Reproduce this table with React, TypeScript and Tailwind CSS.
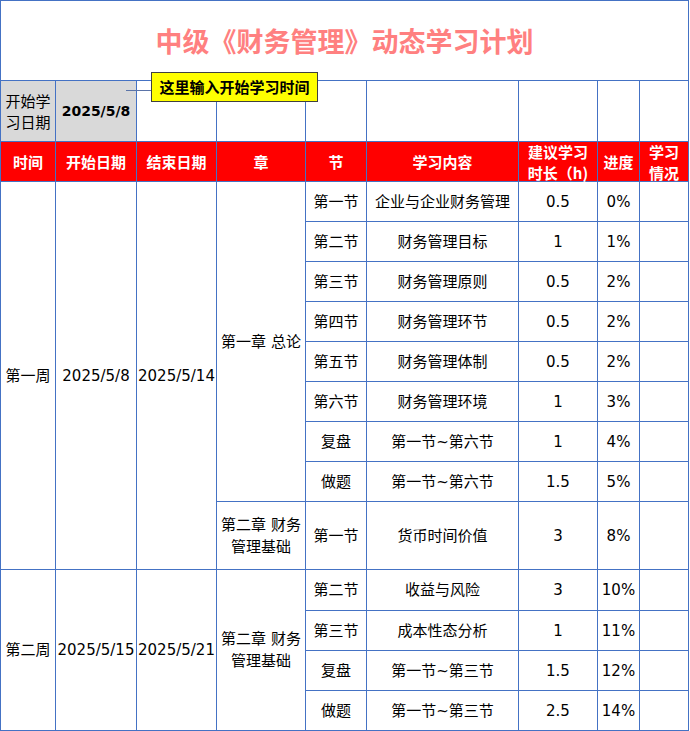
const ROWS = [
  { jie: "第一节", content: "企业与企业财务管理", hours: "0.5", progress: "0%" },
  { jie: "第二节", content: "财务管理目标", hours: "1", progress: "1%" },
  { jie: "第三节", content: "财务管理原则", hours: "0.5", progress: "2%" },
  { jie: "第四节", content: "财务管理环节", hours: "0.5", progress: "2%" },
  { jie: "第五节", content: "财务管理体制", hours: "0.5", progress: "2%" },
  { jie: "第六节", content: "财务管理环境", hours: "1", progress: "3%" },
  { jie: "复盘", content: "第一节~第六节", hours: "1", progress: "4%" },
  { jie: "做题", content: "第一节~第六节", hours: "1.5", progress: "5%" },
];

const WEEK2 = [
  { jie: "第二节", content: "收益与风险", hours: "3", progress: "10%" },
  { jie: "第三节", content: "成本性态分析", hours: "1", progress: "11%" },
  { jie: "复盘", content: "第一节~第三节", hours: "1.5", progress: "12%" },
  { jie: "做题", content: "第一节~第三节", hours: "2.5", progress: "14%" },
];

const cell = "flex items-center justify-center text-center bg-white";
const head = "flex items-center justify-center text-center bg-[#ff0000] text-white font-bold font-['Noto_Sans_CJK_SC',sans-serif] leading-[21px]";

function SectionRow({ jie, content, hours, progress }: { jie: string; content: string; hours: string; progress: string }) {
  return (
    <>
      <div className={cell}>{jie}</div>
      <div className={cell}>{content}</div>
      <div className={cell}>{hours}</div>
      <div className={cell}>{progress}</div>
      <div className={cell}></div>
    </>
  );
}

export default function App() {
  return (
    <div className="relative w-[690px] h-[731px] bg-white overflow-hidden font-['DejaVu_Sans','Noto_Sans_CJK_SC',sans-serif] text-[15px] text-black leading-[22px]">
      <div className="grid w-[689px] gap-px p-px bg-[#4472c4] grid-cols-[54px_80px_79px_88px_60px_151px_78px_41px_48px] grid-rows-[79px_60px_39px_39px_39px_39px_39px_39px_39px_39px_39px_67px_40px_39px_39px_39px]">
        {/* Title */}
        <div className="col-span-9 flex items-center justify-center bg-white text-[27px] font-bold text-[#ff8080] font-['Noto_Sans_CJK_SC',sans-serif]">
          中级《财务管理》动态学习计划
        </div>

        {/* Start date row */}
        <div className="flex items-center justify-center text-center bg-[#d9d9d9] font-['Noto_Sans_CJK_SC',sans-serif] leading-[21px]">
          开始学<br />习日期
        </div>
        <div className="flex items-center justify-center bg-[#d9d9d9] font-bold text-[14px]">2025/5/8</div>
        <div className={cell}></div>
        <div className={cell}></div>
        <div className={cell}></div>
        <div className={cell}></div>
        <div className={cell}></div>
        <div className={cell}></div>
        <div className={cell}></div>

        {/* Header */}
        <div className={head}>时间</div>
        <div className={head}>开始日期</div>
        <div className={head}>结束日期</div>
        <div className={head}>章</div>
        <div className={head}>节</div>
        <div className={head}>学习内容</div>
        <div className={head}>
          建议学习<br />时长（h)
        </div>
        <div className={head}>进度</div>
        <div className={head}>
          学习<br />情况
        </div>

        {/* Week 1 */}
        <div className={`${cell} row-span-9`}>第一周</div>
        <div className={`${cell} row-span-9`}>2025/5/8</div>
        <div className={`${cell} row-span-9`}>2025/5/14</div>
        <div className={`${cell} row-span-8`}>第一章 总论</div>
        {ROWS.map((r, i) => (
          <SectionRow key={i} {...r} />
        ))}
        <div className={cell}>
          第二章 财务<br />管理基础
        </div>
        <SectionRow jie="第一节" content="货币时间价值" hours="3" progress="8%" />

        {/* Week 2 */}
        <div className={`${cell} row-span-4`}>第二周</div>
        <div className={`${cell} row-span-4`}>2025/5/15</div>
        <div className={`${cell} row-span-4`}>2025/5/21</div>
        <div className={`${cell} row-span-4`}>
          第二章 财务<br />管理基础
        </div>
        {WEEK2.map((r, i) => (
          <SectionRow key={i} {...r} />
        ))}
      </div>

      {/* Comment note */}
      <div className="absolute left-[126px] top-[90px] w-[25px] h-px bg-[#5b74a8]" />
      <div className="absolute left-[151px] top-[72px] w-[167px] h-[30px] flex items-center justify-center bg-[#ffff00] border border-[#404040] font-bold text-[15px] font-['Noto_Sans_CJK_SC',sans-serif]">
        这里输入开始学习时间
      </div>
    </div>
  );
}
